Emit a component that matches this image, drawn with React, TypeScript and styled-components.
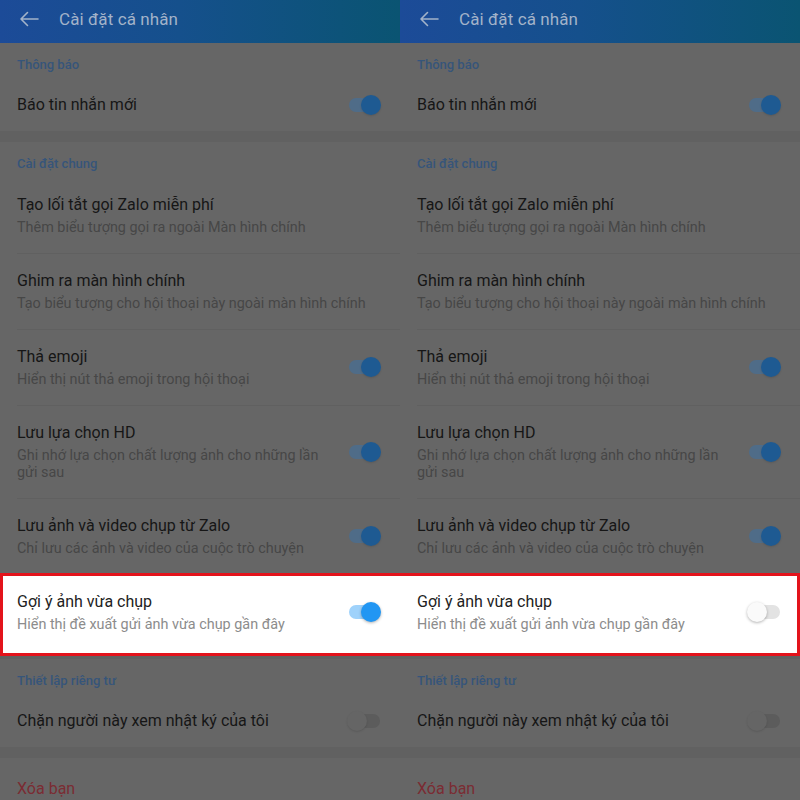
import React from "react";
import styled, { createGlobalStyle, css } from "styled-components";

const Global = createGlobalStyle`
  html, body { margin: 0; padding: 0; background: #616161; }
  body { font-family: Roboto, "Noto Sans", "Liberation Sans", sans-serif; }
  * { box-sizing: border-box; }
`;

const Page = styled.div`
  position: relative;
  display: flex;
  width: 800px;
  height: 800px;
  overflow: hidden;
`;

const Panel = styled.div`
  width: 400px;
  height: 800px;
  background: #616161;
  display: flex;
  flex-direction: column;
`;

const Header = styled.div`
  height: 43px;
  flex-shrink: 0;
  display: flex;
  align-items: center;
  padding: 0 0 6px 19px;
  gap: 20px;
  background: linear-gradient(90deg, #1c4b98 0%, #15508c 45%, #0a5472 100%);
`;

const HeaderTitle = styled.div`
  color: #a3b3c9;
  font-size: 17px;
  letter-spacing: 0.1px;
`;

const Section = styled.div<{ $gap: number }>`
  background: #666666;
  margin-top: ${(p) => p.$gap}px;
`;

const SectionTitle = styled.div`
  padding: 13px 17px 5px;
  height: 36px;
  line-height: 18px;
  font-size: 13px;
  font-weight: 500;
  color: #36557a;
`;

const Row = styled.div<{ $highlight?: boolean; $divider?: boolean; $single?: boolean; $padTop?: number }>`
  position: relative;
  display: flex;
  align-items: center;
  padding: ${(p) =>
    p.$single ? `${p.$padTop ?? 15}px 20px 15px 17px` : "16px 20px 18px 17px"};
  background: #666666;
  ${(p) =>
    p.$divider &&
    css`
      &::after {
        content: "";
        position: absolute;
        left: 17px;
        right: 0;
        bottom: 0;
        height: 1px;
        background: #606060;
      }
    `}
  ${(p) =>
    p.$highlight &&
    css`
      background: #ffffff;
      box-shadow: 0 3px 0 #ffffff;
    `}
`;

const RowText = styled.div<{ $withToggle?: boolean }>`
  flex: 1;
  min-width: 0;
  padding-right: ${(p) => (p.$withToggle ? 24 : 0)}px;
`;

const Title = styled.div<{ $highlight?: boolean; $danger?: boolean }>`
  font-size: 16px;
  line-height: 22px;
  color: ${(p) => (p.$highlight ? "#222222" : p.$danger ? "#7b2c33" : "#161616")};
`;

const Sub = styled.div<{ $highlight?: boolean }>`
  margin-top: 3px;
  font-size: 14.4px;
  line-height: 17px;
  color: ${(p) => (p.$highlight ? "#8c8c8c" : "#474747")};
`;

const Track = styled.div<{ $on: boolean; $bright?: boolean }>`
  position: relative;
  flex-shrink: 0;
  width: 31px;
  height: 14px;
  border-radius: 7px;
  background: ${(p) =>
    p.$bright ? (p.$on ? "#9fd2fb" : "#e3e3e3") : p.$on ? "#4f6c88" : "#5c5c5c"};
`;

const Knob = styled.div<{ $on: boolean; $bright?: boolean }>`
  position: absolute;
  top: -3px;
  ${(p) => (p.$on ? "right: -1px;" : "left: -2px;")}
  width: 20px;
  height: 20px;
  border-radius: 50%;
  background: ${(p) =>
    p.$bright ? (p.$on ? "#2196f3" : "#fafafa") : p.$on ? "#1e5a92" : "#656565"};
  box-shadow: ${(p) =>
    p.$bright ? "0 1px 3px rgba(0,0,0,0.3)" : "0 1px 2px rgba(0,0,0,0.12)"};
`;

const RedFrame = styled.div`
  position: absolute;
  left: 0;
  top: 573px;
  width: 800px;
  height: 83px;
  border: 3px solid #e3131b;
  pointer-events: none;
`;

const BackArrow = () => (
  <svg width="20" height="16" viewBox="0 0 20 16" fill="none">
    <path d="M19 8H2M8.5 1.5L2 8l6.5 6.5" stroke="#a3b3c9" strokeWidth="1.6" strokeLinecap="round" strokeLinejoin="round" />
  </svg>
);

type Item = { title: string; sub?: string; toggle?: boolean; on?: boolean; highlight?: boolean; danger?: boolean; padTop?: number };
type Sec = { title?: string; gap: number; items: Item[] };

const makeSections = (suggestOn: boolean): Sec[] => [
  { title: "Thông báo", gap: 0, items: [{ title: "Báo tin nhắn mới", toggle: true, on: true }] },
  {
    title: "Cài đặt chung",
    gap: 11,
    items: [
      { title: "Tạo lối tắt gọi Zalo miễn phí", sub: "Thêm biểu tượng gọi ra ngoài Màn hình chính" },
      { title: "Ghim ra màn hình chính", sub: "Tạo biểu tượng cho hội thoại này ngoài màn hình chính" },
      { title: "Thả emoji", sub: "Hiển thị nút thả emoji trong hội thoại", toggle: true, on: true },
      { title: "Lưu lựa chọn HD", sub: "Ghi nhớ lựa chọn chất lượng ảnh cho những lần gửi sau", toggle: true, on: true },
      { title: "Lưu ảnh và video chụp từ Zalo", sub: "Chỉ lưu các ảnh và video của cuộc trò chuyện", toggle: true, on: true },
      { title: "Gợi ý ảnh vừa chụp", sub: "Hiển thị đề xuất gửi ảnh vừa chụp gần đây", toggle: true, on: suggestOn, highlight: true },
    ],
  },
  { title: "Thiết lập riêng tư", gap: 8, items: [{ title: "Chặn người này xem nhật ký của tôi", toggle: true, on: false }] },
  { gap: 11, items: [{ title: "Xóa bạn", danger: true, padTop: 20 }] },
];

const Toggle = ({ on, bright }: { on: boolean; bright?: boolean }) => (
  <Track $on={on} $bright={bright}>
    <Knob $on={on} $bright={bright} />
  </Track>
);

const Screen = ({ suggestOn }: { suggestOn: boolean }) => {
  const sections = makeSections(suggestOn);
  return (
    <Panel>
      <Header>
        <BackArrow />
        <HeaderTitle>Cài đặt cá nhân</HeaderTitle>
      </Header>
      {sections.map((s, si) => (
        <Section key={si} $gap={s.gap}>
          {s.title && <SectionTitle>{s.title}</SectionTitle>}
          {s.items.map((it, ii) => (
            <Row
              key={ii}
              $highlight={it.highlight}
              $single={!it.sub}
              $padTop={it.padTop}
              $divider={ii < s.items.length - 1 && !s.items[ii + 1].highlight}
            >
              <RowText $withToggle={!!it.toggle}>
                <Title $highlight={it.highlight} $danger={it.danger}>{it.title}</Title>
                {it.sub && <Sub $highlight={it.highlight}>{it.sub}</Sub>}
              </RowText>
              {it.toggle && <Toggle on={!!it.on} bright={it.highlight} />}
            </Row>
          ))}
        </Section>
      ))}
    </Panel>
  );
};

export default function App() {
  return (
    <>
      <Global />
      <Page>
        <Screen suggestOn={true} />
        <Screen suggestOn={false} />
        <RedFrame />
      </Page>
    </>
  );
}
